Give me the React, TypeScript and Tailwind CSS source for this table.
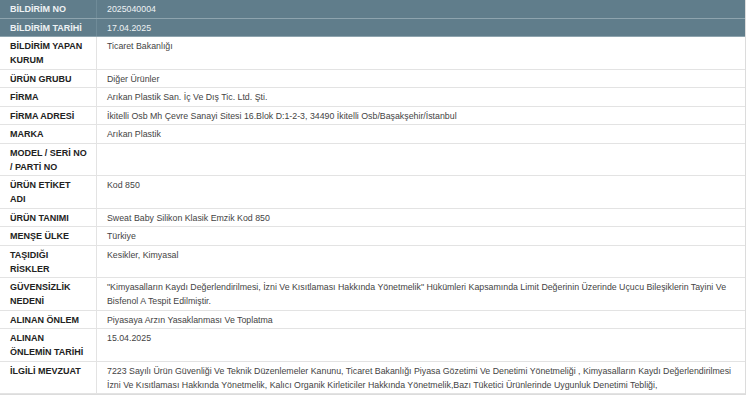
const rows: { label: string[]; value: string; head?: boolean }[] = [
  { label: ['BİLDİRİM NO'], value: '2025040004', head: true },
  { label: ['BİLDİRİM TARİHİ'], value: '17.04.2025', head: true },
  { label: ['BİLDİRİM YAPAN', 'KURUM'], value: 'Ticaret Bakanlığı' },
  { label: ['ÜRÜN GRUBU'], value: 'Diğer Ürünler' },
  { label: ['FİRMA'], value: 'Arıkan Plastik San. İç Ve Dış Tic. Ltd. Şti.' },
  {
    label: ['FİRMA ADRESİ'],
    value: 'İkitelli Osb Mh Çevre Sanayi Sitesi 16.Blok D:1-2-3, 34490 İkitelli Osb/Başakşehir/İstanbul',
  },
  { label: ['MARKA'], value: 'Arıkan Plastik' },
  { label: ['MODEL / SERİ NO', '/ PARTİ NO'], value: '' },
  { label: ['ÜRÜN ETİKET', 'ADI'], value: 'Kod 850' },
  { label: ['ÜRÜN TANIMI'], value: 'Sweat Baby Silikon Klasik Emzik Kod 850' },
  { label: ['MENŞE ÜLKE'], value: 'Türkiye' },
  { label: ['TAŞIDIĞI', 'RİSKLER'], value: 'Kesikler, Kimyasal' },
  {
    label: ['GÜVENSİZLİK', 'NEDENİ'],
    value:
      '"Kimyasalların Kaydı Değerlendirilmesi, İzni Ve Kısıtlaması Hakkında Yönetmelik" Hükümleri Kapsamında Limit Değerinin Üzerinde Uçucu Bileşiklerin Tayini Ve Bisfenol A Tespit Edilmiştir.',
  },
  { label: ['ALINAN ÖNLEM'], value: 'Piyasaya Arzın Yasaklanması Ve Toplatma' },
  { label: ['ALINAN', 'ÖNLEMİN TARİHİ'], value: '15.04.2025' },
  {
    label: ['İLGİLİ MEVZUAT'],
    value:
      '7223 Sayılı Ürün Güvenliği Ve Teknik Düzenlemeler Kanunu, Ticaret Bakanlığı Piyasa Gözetimi Ve Denetimi Yönetmeliği , Kimyasalların Kaydı Değerlendirilmesi İzni Ve Kısıtlaması Hakkında Yönetmelik, Kalıcı Organik Kirleticiler Hakkında Yönetmelik,Bazı Tüketici Ürünlerinde Uygunluk Denetimi Tebliği,',
  },
];

export default function App() {
  return (
    <div className="w-[750px] h-[396px] overflow-hidden bg-white" style={{ fontFamily: '"Liberation Sans", Arial, sans-serif' }}>
      <div className="w-[746px] border-r border-[#dcdcdc] border-b">
        {rows.map((r, i) =>
          r.head ? (
            <div key={i} className="flex bg-[#607d8b] border-b border-[#8ea4ae] leading-[14px] text-[#eef2f4]">
              <div className="w-[97px] shrink-0 pl-[10px] pt-[2px] pb-[1.5px] text-[9px] font-bold border-r border-[#6f8b98]">{r.label[0]}</div>
              <div className="flex-1 pl-[10px] pt-[2px] pb-[1.5px] text-[8.8px]">{r.value}</div>
            </div>
          ) : (
            <div key={i} className="flex border-b border-[#e3e3e3] leading-[14px]">
              <div className="w-[97px] shrink-0 pl-[10px] pt-[2px] pb-[1.5px] text-[9px] font-bold text-[#222] border-r border-[#e3e3e3]">
                {r.label.map((l, j) => (
                  <div key={j}>{l}</div>
                ))}
              </div>
              <div className="flex-1 pl-[10px] pr-[12px] pt-[2px] pb-[1.5px] text-[8.8px] text-[#444]">{r.value}</div>
            </div>
          )
        )}
      </div>
    </div>
  );
}
